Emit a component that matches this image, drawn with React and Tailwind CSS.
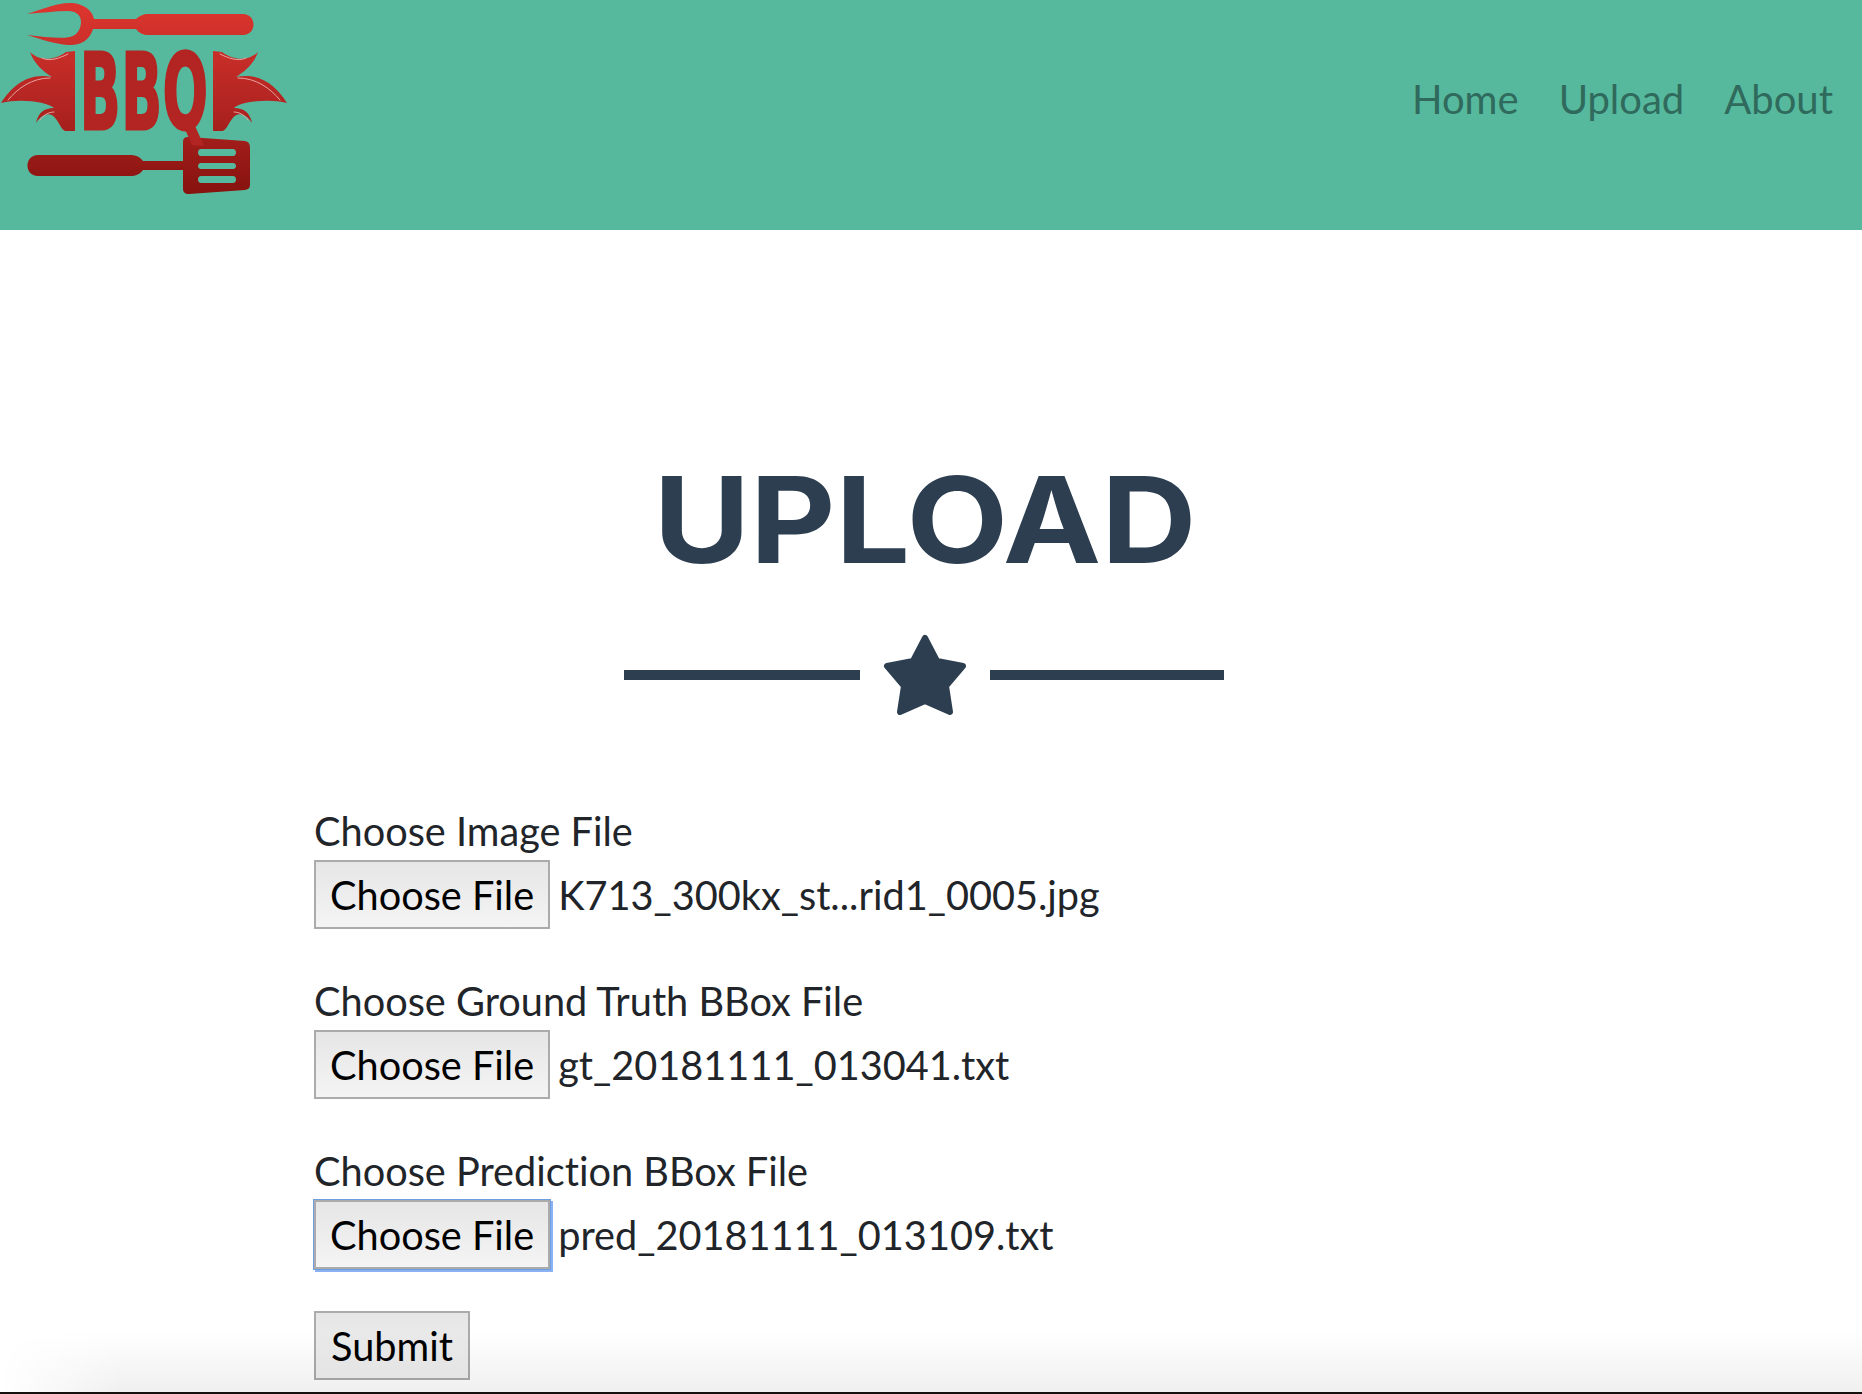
import React from 'react';

const lato = { fontFamily: 'Lato, sans-serif' };

const WING = 'M30 52 C38 60 52 62 66 52 L75 51 L75 131 L66 131 C62 131 60 124 56 119 C50 111 42 114 36 123 C38 113 44 108 54 108 C48 102 20 98 1 103 C12 86 28 72 52 77 C44 72 34 64 30 52 Z';

const Wing = (props) => (
  <g {...props}>
    <path d={WING} fill="url(#bbq)" />
    <g fill="none" stroke="#e9a3a0" strokeWidth="1" strokeLinecap="round">
      <path d="M42 58 C50 62 60 58 68 54" />
      <path d="M8 100 C18 88 32 78 50 78" />
      <path d="M40 120 C44 114 50 112 54 112" />
    </g>
  </g>
);

const Logo = () => (
  <svg viewBox="0 0 300 200" className="w-[300px] h-[200px] shrink-0" aria-label="BBQ">
    <defs>
      <linearGradient id="bbq" gradientUnits="userSpaceOnUse" x1="0" y1="10" x2="0" y2="195">
        <stop offset="0" stopColor="#da352e" />
        <stop offset="0.5" stopColor="#b32522" />
        <stop offset="1" stopColor="#85120e" />
      </linearGradient>
    </defs>
    {/* wings */}
    <Wing />
    <Wing transform="translate(288 0) scale(-1 1)" />
    <g fill="url(#bbq)">
      {/* fork */}
      <path d="M27 14 C45 8 60 2 72 3 C84 4 92 10 94 19 L136 19 C139 16 143 14 148 14 L243 14 C257 14 257 35 243 35 L148 35 C143 35 139 33 136 29 L93 29 C90 40 80 46 68 45 C55 44 40 39 27 35 C45 37 60 39 70 37 C78 35 81 28 81 22 C81 15 76 11 68 11 C55 11 40 13 27 14 Z" />
      {/* spatula */}
      <path
        fillRule="evenodd"
        d="M38 155 L130 155 C136 155 140 157 143 161 L183 161 L183 142 C183 138 185 137 189 137 L245 141 C249 142 250 144 250 148 L250 184 C250 188 249 189 245 190 L189 194 C185 194 183 192 183 189 L183 170 L143 170 C140 174 136 176 130 176 L38 176 C24 176 24 155 38 155 Z M201 149 C197 149 197 156 201 156 L233 156 C237 156 237 149 233 149 Z M201 163 C197 163 197 169 201 169 L233 169 C237 169 237 163 233 163 Z M201 176 C197 176 197 183 201 183 L233 183 C237 183 237 176 233 176 Z"
      />
    </g>
    <text
      transform="translate(80 129) scale(.5 1)"
      fill="#b32522"
      stroke="#b32522"
      strokeWidth="3"
      fontFamily="'DejaVu Sans', sans-serif"
      fontWeight="700"
      fontSize="106"
      letterSpacing="2"
    >
      BBQ
    </text>
  </svg>
);

const Star = () => (
  <svg viewBox="0 0 84 82" className="w-[84px] h-[82px] shrink-0" fill="#2c3e50" stroke="#2c3e50" strokeWidth="6" strokeLinejoin="round">
    <polygon points="42,4 54,27 80,32 63,52 67,78 42,67 17,78 21,52 4,32 30,27" />
  </svg>
);

const FileRow = ({ label, file, focused }) => (
  <div className="mb-[42px]">
    <label className="block text-[39.7px] leading-[59px] text-[#212529]">{label}</label>
    <div className="flex items-center">
      <span className={`flex items-center h-[69px] px-[14px] text-[39.7px] text-black bg-gradient-to-b from-[#e6e6e6] to-[#f4f4f4] border-2 border-[#ababab] ${focused ? 'shadow-[0_0_0_1px_#6f9fe0,2px_2px_0_1px_#8ab1f2]' : ''}`}>
        Choose File
      </span>
      <span className="ml-[8px] text-[39.7px] text-[#212529]">{file}</span>
    </div>
  </div>
);

export default function App() {
  return (
    <div style={lato} className="relative h-[1394px] overflow-hidden bg-white [font-variant-ligatures:none]">
      <header className="flex items-start justify-between h-[230px] bg-[#56b99d]">
        <Logo />
        <nav className="flex gap-[40px] pt-[69px] pr-[29px] text-[40px] text-[#2f6a5c]">
          <span>Home</span>
          <span>Upload</span>
          <span>About</span>
        </nav>
      </header>
      <main className="pl-[314px] pr-[326px]">
        <h1 style={{ fontFamily: 'Inter, sans-serif' }} className="mt-[230px] text-center text-[120px] leading-[120px] font-bold text-[#2c3e50] scale-x-110">UPLOAD</h1>
        <div className="flex items-center justify-center gap-[23px] mt-[54px] -ml-[2px]">
          <div className="w-[236px] h-[10px] bg-[#2c3e50]" />
          <Star />
          <div className="w-[234px] h-[10px] bg-[#2c3e50]" />
        </div>
        <div className="mt-[85px]">
          <FileRow label="Choose Image File" file="K713_300kx_st...rid1_0005.jpg" />
          <FileRow label="Choose Ground Truth BBox File" file="gt_20181111_013041.txt" />
          <FileRow label="Choose Prediction BBox File" file="pred_20181111_013109.txt" focused />
          <span className="inline-flex items-center h-[69px] px-[15px] text-[39.7px] text-black bg-gradient-to-b from-[#e6e6e6] to-[#f0f0f0] border-2 border-[#ababab]">Submit</span>
        </div>
      </main>
      <div className="absolute inset-x-0 bottom-[2px] h-[60px] bg-gradient-to-b from-transparent to-black/6 pointer-events-none [mask-image:linear-gradient(to_right,transparent,black_120px)]" />
      <div className="absolute inset-x-0 bottom-0 h-[2px] bg-[#14110f]" />
    </div>
  );
}
